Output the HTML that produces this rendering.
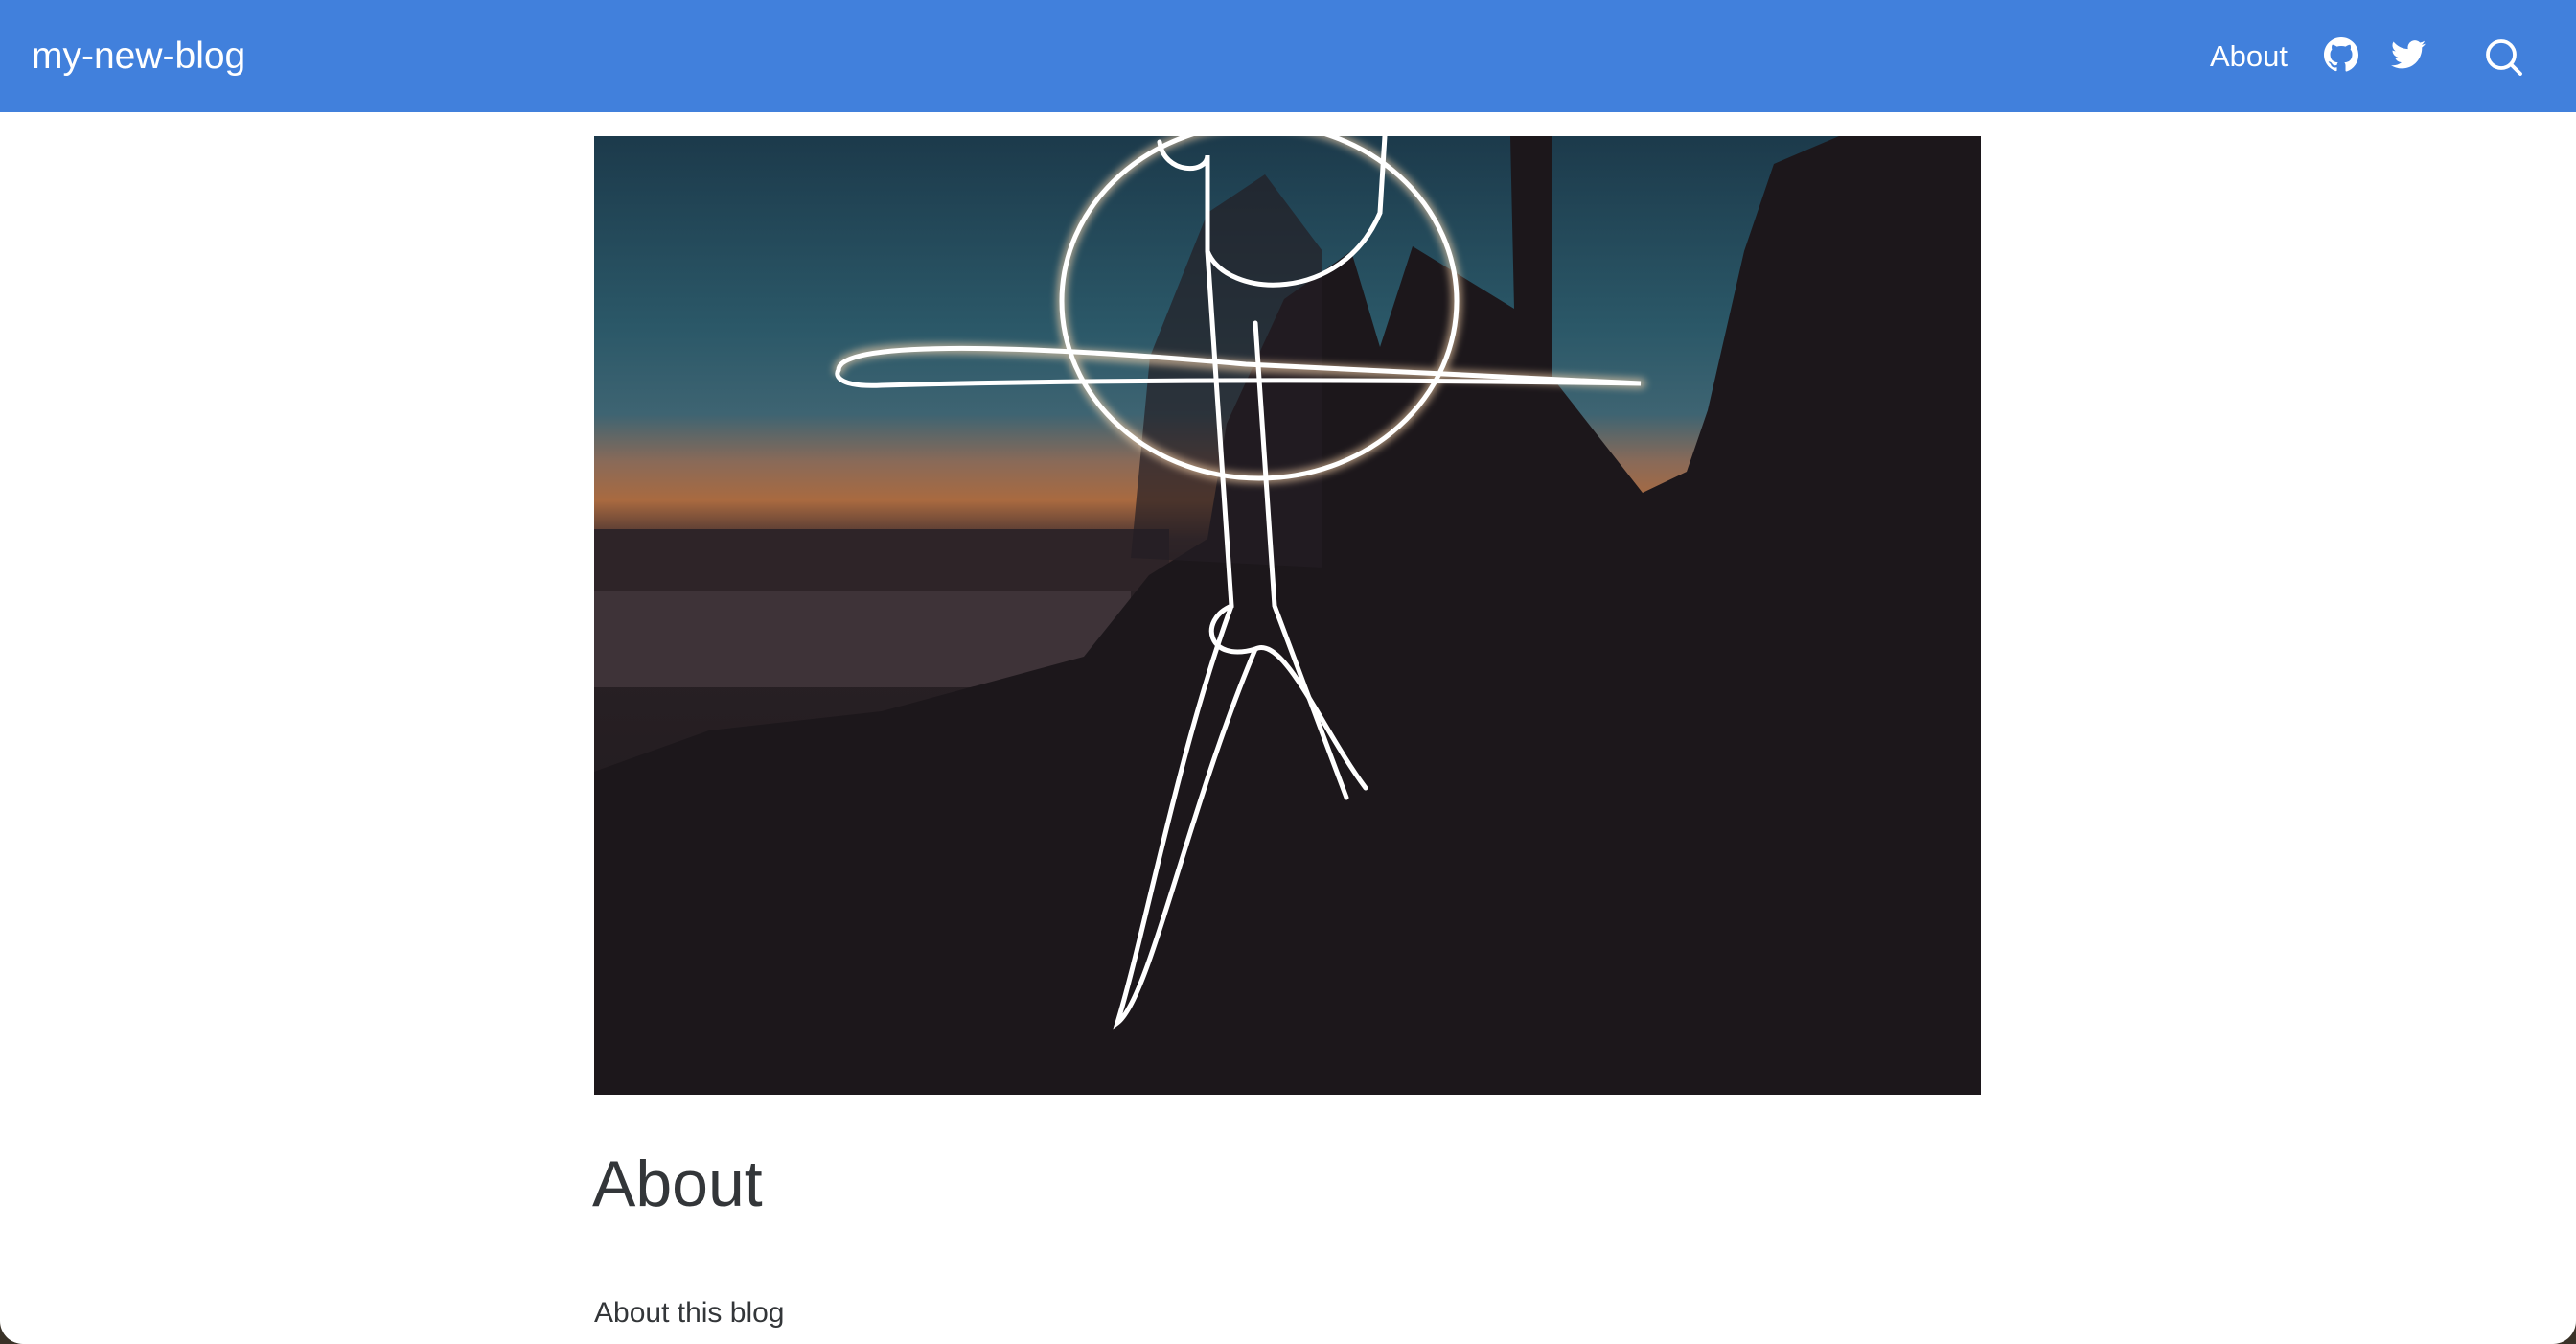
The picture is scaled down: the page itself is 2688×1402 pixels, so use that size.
<!DOCTYPE html>
<html><head><meta charset="utf-8"><style>
*{margin:0;padding:0;box-sizing:border-box}
html,body{width:2688px;height:1402px;overflow:hidden;background:#3a3228}
.page{position:absolute;left:0;top:0;width:2688px;height:1402px;background:#fff;border-radius:0 0 24px 24px;overflow:hidden}
.nav{position:absolute;left:0;top:0;width:2688px;height:117px;background:#4180dc}
.brand{position:absolute;left:33px;top:36px;font:39px/1.2 "Liberation Sans",sans-serif;color:#fff}
.about{position:absolute;left:2306px;top:40px;font:31px/1.2 "Liberation Sans",sans-serif;color:#fff}
svg.ic{position:absolute}
.img{position:absolute;left:620px;top:142px;width:1447px;height:1000px}
h1{position:absolute;left:618px;top:1195px;font:400 68px/1.2 "Liberation Sans",sans-serif;color:#333639}
p{position:absolute;left:620px;top:1352px;font:30px/1.2 "Liberation Sans",sans-serif;color:#333639}
</style></head><body><div class="page">
<div class="nav">
<div class="brand">my-new-blog</div>
<div class="about">About</div>
<svg class="ic" style="left:2425px;top:39px" width="36" height="36" viewBox="0 0 16 16"><path fill="#fff" d="M8 0C3.58 0 0 3.58 0 8c0 3.54 2.290 6.530 5.470 7.590.4.07.55-.17.55-.38v-1.33c-2.23.48-2.7-.95-2.7-.95-.36-.92-.89-1.170-.89-1.170-.73-.5.05-.49.05-.49.8.06 1.23.83 1.23.83.71 1.22 1.87.87 2.33.66.07-.52.28-.87.51-1.07-1.78-.2-3.64-.89-3.640-3.950 0-.87.31-1.59.83-2.15-.08-.2-.36-1.02.08-2.12 0 0 .67-.21 2.2.82a7.6 7.6 0 0 1 4 0c1.53-1.04 2.2-.82 2.2-.82.44 1.1.16 1.92.08 2.12.51.56.82 1.27.82 2.15 0 3.07-1.87 3.75-3.65 3.95.29.25.54.73.54 1.48v2.2c0 .21.15.46.55.38A8.01 8.01 0 0 0 16 8c0-4.42-3.58-8-8-8z"/></svg>
<svg class="ic" style="left:2495px;top:42px" width="36" height="30" viewBox="0 0 24 20"><path fill="#fff" d="M24 2.4a9.8 9.8 0 0 1-2.8.8A4.9 4.9 0 0 0 23.3.5a9.9 9.9 0 0 1-3.1 1.2A4.9 4.9 0 0 0 11.8 6.1 14 14 0 0 1 1.7 1a4.9 4.9 0 0 0 1.5 6.6A4.9 4.9 0 0 1 1 7v.1a4.9 4.9 0 0 0 3.9 4.8 4.900 4.900 0 0 1-2.2.1 4.9 4.9 0 0 0 4.6 3.4A9.9 9.9 0 0 1 0 17.4 14 14 0 0 0 7.5 19.6c9.1 0 14-7.5 14-14v-.6A10 10 0 0 0 24 2.4z"/></svg>
<svg class="ic" style="left:2592px;top:39px" width="42" height="42" viewBox="0 0 42 42"><circle cx="18" cy="18" r="14" fill="none" stroke="#fff" stroke-width="3.8"/><line x1="28.5" y1="28.5" x2="38" y2="38" stroke="#fff" stroke-width="3.8" stroke-linecap="round"/></svg>
</div>
<svg class="img" viewBox="0 0 1447 1000" preserveAspectRatio="none">
<defs><linearGradient id="sky" x1="0" y1="0" x2="0" y2="1">
<stop offset="0" stop-color="#1c3a4b"/><stop offset=".2" stop-color="#2b5868"/><stop offset=".29" stop-color="#3e6472"/><stop offset=".34" stop-color="#8a6a58"/><stop offset=".38" stop-color="#a96a40"/><stop offset=".42" stop-color="#4a3432"/><stop offset=".47" stop-color="#2a2226"/><stop offset="1" stop-color="#1a1519"/></linearGradient>
<filter id="gl"><feGaussianBlur stdDeviation="4"/></filter></defs>
<rect width="1447" height="1000" fill="url(#sky)"/>
<rect y="410" width="600" height="65" fill="#2e2428"/>
<rect y="475" width="560" height="100" fill="#3e3338"/>
<path d="M0 663 L120 620 L300 600 L511 543 L579 458 L640 420 L660 300 L720 170 L790 120 L820 220 L854 115 L960 180 L956 0 L1000 0 L1000 252 L1094 372 L1140 350 L1162 286 L1200 120 L1231 29 L1299 0 L1447 0 L1447 1000 L0 1000Z" fill="#1c171b"/>
<path d="M560 440 L580 230 L640 80 L700 40 L760 120 L760 450Z" fill="#241e24" opacity=".7"/>
<g fill="none" stroke="#fff" stroke-width="5" stroke-linecap="round">
<g filter="url(#gl)" stroke="#ffd9b0" stroke-width="11" opacity=".6">
<ellipse cx="694" cy="172" rx="206" ry="185"/>
<path d="M255 244 C260 210 420 220 680 240 L1092 258"/>
</g>
<ellipse cx="694" cy="172" rx="206" ry="185"/>
<path d="M590 6 C595 40 640 40 640 20 L640 120 C660 170 780 175 820 80 L825 0"/>
<path d="M255 244 C255 215 420 215 680 238 L1092 258 C900 255 600 252 300 260 C260 262 250 252 255 244Z"/>
<path d="M640 120 L665 490 C630 505 640 550 690 535 C720 520 760 620 805 680"/>
<path d="M665 490 C610 640 575 830 546 925 C580 900 620 700 690 535"/>
<path d="M690 195 L710 490 L785 690"/>
</g>
</svg>
<h1>About</h1>
<p>About this blog</p>
</div></body></html>
